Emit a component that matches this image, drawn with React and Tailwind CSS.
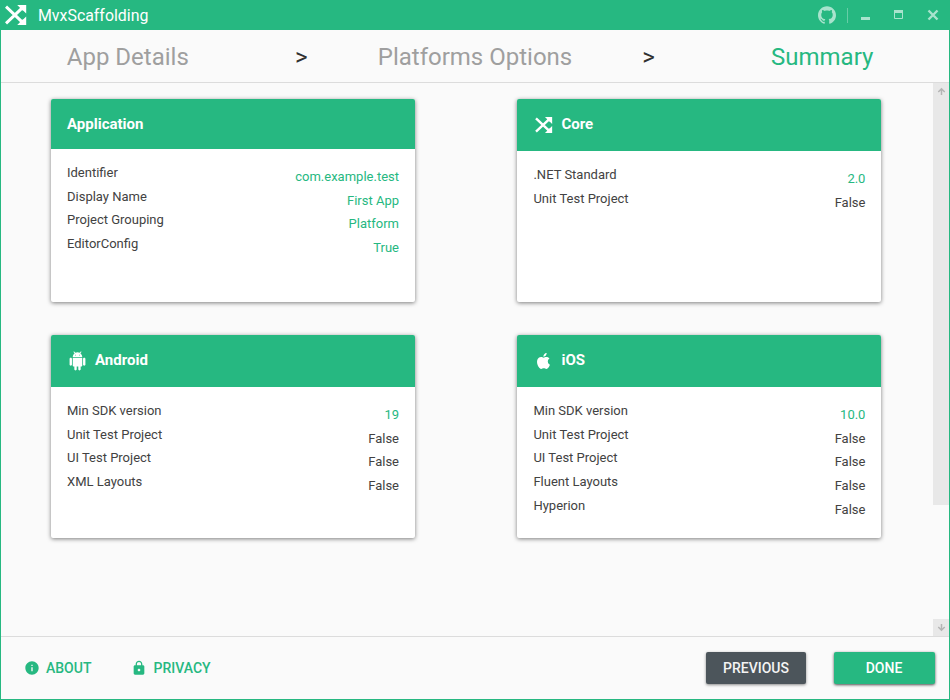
import React from "react";
import { SiGithub } from "react-icons/si";
import { MdInfo, MdLock } from "react-icons/md";

function MvxLogo({ className }) {
  return (
    <svg viewBox="0 0 22 20" className={className} fill="none" stroke="currentColor">
      <path d="M1 1.6 18.6 18.4M1 18.4 18.6 1.6" strokeWidth="3" />
      <path d="M12.2 0H21.2V8.6L18.6 6.1 16 4.6 14.7 2.6ZM12.2 20H21.2V11.4L18.6 13.9 16 15.4 14.7 17.4Z" fill="currentColor" stroke="none" />
    </svg>
  );
}

function AndroidIcon() {
  return (
    <svg viewBox="0 0 24 24" className="mt-[2px] h-5 w-5" fill="currentColor">
      <path d="M6 18c0 .55.45 1 1 1h1v3.5c0 .83.67 1.5 1.5 1.5s1.5-.67 1.5-1.5V19h2v3.5c0 .83.67 1.5 1.5 1.5s1.5-.67 1.5-1.5V19h1c.55 0 1-.45 1-1V8H6v10zM3.5 8C2.67 8 2 8.67 2 9.5v7c0 .83.67 1.5 1.5 1.5S5 17.33 5 16.5v-7C5 8.67 4.33 8 3.5 8zm17 0c-.83 0-1.5.67-1.5 1.5v7c0 .83.67 1.5 1.5 1.5s1.5-.67 1.5-1.5v-7c0-.83-.67-1.5-1.5-1.5zm-4.97-5.84l1.3-1.3c.2-.2.2-.51 0-.71-.2-.2-.51-.2-.71 0l-1.48 1.48C13.85 1.23 12.95 1 12 1c-.96 0-1.86.23-2.66.63L7.85.15c-.2-.2-.51-.2-.71 0-.2.2-.2.51 0 .71l1.31 1.31C6.97 3.26 6 5.01 6 7h12c0-1.99-.97-3.75-2.47-4.84zM10 5H9V4h1v1zm5 0h-1V4h1v1z" />
    </svg>
  );
}

function AppleIcon() {
  return (
    <svg viewBox="0 0 24 24" className="mt-[2px] h-5 w-5" fill="currentColor">
      <path d="M18.71,19.5C17.88,20.74 17,21.95 15.66,21.97C14.32,22 13.89,21.18 12.37,21.18C10.84,21.18 10.37,21.95 9.1,22C7.79,22.05 6.8,20.68 5.96,19.47C4.25,17 2.94,12.45 4.7,9.39C5.57,7.87 7.13,6.91 8.82,6.88C10.1,6.86 11.32,7.75 12.11,7.75C12.89,7.75 14.37,6.68 15.92,6.84C16.57,6.87 18.39,7.1 19.56,8.82C19.47,8.88 17.39,10.1 17.41,12.63C17.44,15.65 20.06,16.66 20.09,16.67C20.06,16.74 19.67,18.11 18.71,19.5M13,3.5C13.73,2.67 14.94,2.04 15.94,2C16.07,3.17 15.6,4.35 14.9,5.19C14.21,6.04 13.07,6.7 11.95,6.61C11.8,5.46 12.36,4.26 13,3.5Z" />
    </svg>
  );
}

function TitleBar() {
  return (
    <header className="flex h-[30px] items-center bg-[#26b881] text-white">
      <MvxLogo className="ml-[4px] h-5 w-[22px]" />
      <h1 className="ml-[11px] pt-[2px] text-[15.9px] leading-[28px]">MvxScaffolding</h1>
      <div className="ml-auto flex items-center text-[#a8e3cd]">
        <SiGithub className="h-[18px] w-[18px]" />
        <div className="ml-[11px] h-[15px] w-px bg-[#67cda7]" />
        <svg viewBox="0 0 86 16" className="mr-[6px] ml-[9px] h-4 w-[86px]" fill="none" stroke="currentColor">
          <path d="M4 11.5h9" strokeWidth="3" />
          <path d="M37.5 4v7.5h8V4" />
          <path d="M37 4.5h9" strokeWidth="3" />
          <path d="m71.5 3.5 9 9m0-9-9 9" strokeWidth="2.4" />
        </svg>
      </div>
    </header>
  );
}

function Steps() {
  return (
    <nav className="grid h-[53px] grid-cols-5 items-center border-b border-[#dcdcdc] pt-[2px] pr-[40px] pl-[40px] text-center text-[24px] whitespace-nowrap text-[#9f9f9f]">
      <span>App Details</span>
      <span className="text-[24px] text-[#303030]">&gt;</span>
      <span className="-mx-4">Platforms Options</span>
      <span className="text-[24px] text-[#303030]">&gt;</span>
      <span className="text-[#26b881]">Summary</span>
    </nav>
  );
}

const cards = [
  {
    title: "Application",
    rows: [
      ["Identifier", "com.example.test"],
      ["Display Name", "First App"],
      ["Project Grouping", "Platform"],
      ["EditorConfig", "True"],
    ],
  },
  {
    title: "Core",
    icon: <MvxLogo className="mt-[1px] ml-[1px] h-4 w-[18px]" />,
    rows: [
      [".NET Standard", "2.0"],
      ["Unit Test Project", "False"],
    ],
  },
  {
    title: "Android",
    icon: <AndroidIcon />,
    rows: [
      ["Min SDK version", "19"],
      ["Unit Test Project", "False"],
      ["UI Test Project", "False"],
      ["XML Layouts", "False"],
    ],
  },
  {
    title: "iOS",
    icon: <AppleIcon />,
    rows: [
      ["Min SDK version", "10.0"],
      ["Unit Test Project", "False"],
      ["UI Test Project", "False"],
      ["Fluent Layouts", "False"],
      ["Hyperion", "False"],
    ],
  },
];

function Card({ title, icon, rows }) {
  return (
    <section className="flex h-[203px] flex-col overflow-hidden rounded-[2px] bg-white shadow-[0_1px_4px_rgba(0,0,0,0.5)]">
      <h2
        className={
          icon
            ? "flex h-[52px] items-center bg-[#26b881] px-4 pb-[2px] text-[15px] font-bold text-white"
            : "flex h-[50px] items-center bg-[#26b881] px-4 text-[15px] font-bold text-white"
        }
      >
        {icon && <span className="mr-2 ml-px flex w-[19px]">{icon}</span>}
        {title}
      </h2>
      <dl className="px-4 pt-3 text-[13px] text-[#424242]">
        {rows.map(([label, value]) => (
          <div key={label} className="flex h-[23.7px] justify-between leading-[24px]">
            <dt>{label}</dt>
            <dd className={value === "False" ? "pt-1" : "pt-1 text-[#26b881]"}>{value}</dd>
          </div>
        ))}
      </dl>
    </section>
  );
}

function ScrollBar() {
  return (
    <div className="flex w-4 flex-col justify-between text-[#b4b4b4]">
      <div className="h-[422px] bg-[#e8e8e8]">
        <svg viewBox="0 0 16 17" className="h-[17px] w-4" fill="none" stroke="currentColor">
          <path d="M8.5 12V6M5.3 9l3.2-3.2L11.7 9" strokeWidth="1.5" />
        </svg>
      </div>
      <div className="h-[17px] bg-[#e8e8e8]">
        <svg viewBox="0 0 16 17" className="h-[17px] w-4" fill="none" stroke="currentColor">
          <path d="M8.5 5v6M5.3 8l3.2 3.2L11.7 8" strokeWidth="1.5" />
        </svg>
      </div>
    </div>
  );
}

export default function App() {
  return (
    <div className="flex h-[700px] w-[950px] flex-col overflow-hidden border border-t-0 border-[#26b881] bg-[#fafafa] font-['Roboto',sans-serif]">
      <TitleBar />
      <Steps />
      <div className="flex min-h-0 flex-1">
        <main className="grid flex-1 grid-cols-[364px_364px] content-start gap-x-[102.45px] gap-y-[33px] pt-4 pl-[50px]">
          {cards.map((card) => (
            <Card key={card.title} {...card} />
          ))}
        </main>
        <ScrollBar />
      </div>
      <footer className="flex h-[63px] items-center border-t border-[#dcdcdc] pr-[14px] pl-[23px] text-[14px] font-medium text-[#26b881]">
        <a className="flex items-center">
          <MdInfo className="mr-[6px] h-4 w-4" />
          ABOUT
        </a>
        <a className="ml-10 flex items-center">
          <MdLock className="mr-[6px] h-4 w-4" />
          PRIVACY
        </a>
        <button className="ml-auto h-8 w-[100px] rounded-[2px] bg-[#4c555b] text-[#f4f4f4] shadow-[0_1px_3px_rgba(0,0,0,0.45)]">PREVIOUS</button>
        <button className="ml-7 h-8 w-[101px] rounded-[2px] bg-[#26b881] pr-px text-white shadow-[0_1px_3px_rgba(0,0,0,0.7)]">DONE</button>
      </footer>
    </div>
  );
}
